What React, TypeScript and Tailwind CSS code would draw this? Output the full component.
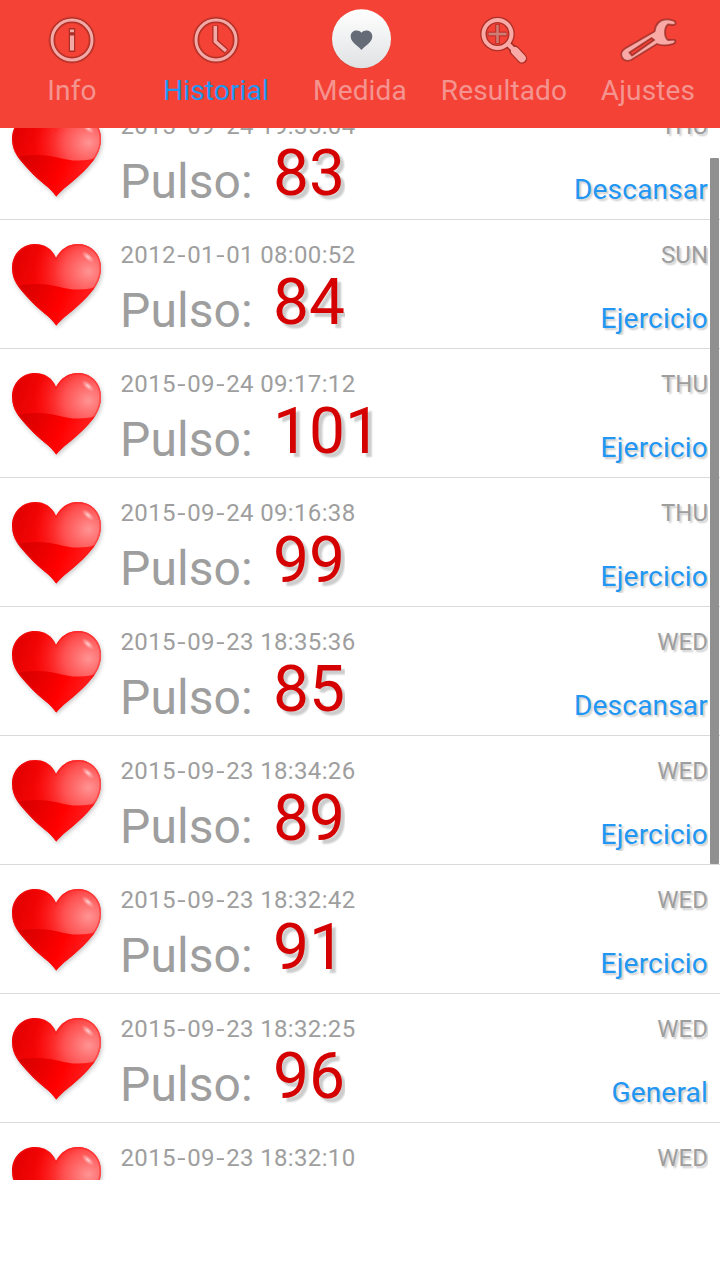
import React from 'react';

const records = [
  { date: '2015-09-24', time: '19:35:04', day: 'THU', pulse: 83, mode: 'Descansar' },
  { date: '2012-01-01', time: '08:00:52', day: 'SUN', pulse: 84, mode: 'Ejercicio' },
  { date: '2015-09-24', time: '09:17:12', day: 'THU', pulse: 101, mode: 'Ejercicio' },
  { date: '2015-09-24', time: '09:16:38', day: 'THU', pulse: 99, mode: 'Ejercicio' },
  { date: '2015-09-23', time: '18:35:36', day: 'WED', pulse: 85, mode: 'Descansar' },
  { date: '2015-09-23', time: '18:34:26', day: 'WED', pulse: 89, mode: 'Ejercicio' },
  { date: '2015-09-23', time: '18:32:42', day: 'WED', pulse: 91, mode: 'Ejercicio' },
  { date: '2015-09-23', time: '18:32:25', day: 'WED', pulse: 96, mode: 'General' },
  { date: '2015-09-23', time: '18:32:10', day: 'WED', pulse: 88, mode: 'General' },
];

const heartPath =
  'M44.2 82.5C39 74 28 68 18 57C7 45 0 38 0 25C0 11 10 1 23 1C33 1 40 6 44 15C49 6 56 1 66 1C79 1 89 11 89 25C89 38 82 47 71 58C61 68 50 75 44.2 82.5Z';

function HeartDefs() {
  return (
    <svg width="0" height="0" className="absolute">
      <defs>
        <linearGradient id="heartBase" x1="0" y1="0" x2="1" y2="0.3">
          <stop offset="0" stopColor="#dc0000" />
          <stop offset="0.4" stopColor="#f80606" />
          <stop offset="1" stopColor="#ff1c1c" />
        </linearGradient>
        <radialGradient id="heartGloss" cx="0.86" cy="0.34" r="0.62">
          <stop offset="0" stopColor="#ff9494" />
          <stop offset="0.45" stopColor="#ff5c5c" stopOpacity="0.85" />
          <stop offset="1" stopColor="#ff2020" stopOpacity="0" />
        </radialGradient>
        <radialGradient id="heartSpark" cx="0.5" cy="0.5" r="0.5">
          <stop offset="0" stopColor="#ffd8d8" />
          <stop offset="1" stopColor="#ffb0b0" stopOpacity="0" />
        </radialGradient>
        <linearGradient id="heartLower" x1="0" y1="0" x2="1" y2="0.2">
          <stop offset="0" stopColor="#d00000" />
          <stop offset="0.3" stopColor="#e40000" />
          <stop offset="0.6" stopColor="#ff0000" />
          <stop offset="1" stopColor="#ff2a2a" />
        </linearGradient>
        <clipPath id="heartClip">
          <path d={heartPath} />
        </clipPath>
      </defs>
    </svg>
  );
}

function Heart() {
  return (
    <svg viewBox="0 0 96 92" className="w-24 h-[92px] drop-shadow-[1px_2px_2px_rgba(0,0,0,0.22)]">
      <path d={heartPath} fill="url(#heartBase)" />
      <g clipPath="url(#heartClip)">
        <rect width="89" height="84" fill="url(#heartGloss)" />
        <ellipse cx="76" cy="14" rx="8" ry="3.5" transform="rotate(42 76 14)" fill="url(#heartSpark)" />
        <path d="M0 44C12 41 25 40 38 42C50 44 56 47 66 46.5C75 46.5 82 45 89 42V84H0Z" fill="url(#heartLower)" />
        <path d={heartPath} fill="none" stroke="#ff1010" strokeOpacity="0.4" strokeWidth="3" />
      </g>
    </svg>
  );
}

function InfoIcon() {
  return (
    <svg viewBox="0 0 60 60" className="w-[60px] h-[60px]" fill="none">
      <circle cx="30" cy="30" r="20" stroke="#8f2520" strokeOpacity="0.35" strokeWidth="7" />
      <circle cx="30" cy="30" r="20" stroke="#8f2520" strokeOpacity="0.55" strokeWidth="5" />
      <circle cx="30" cy="30" r="20" stroke="#f3aaa6" strokeWidth="3" />
      <path d="M30 18V42" stroke="#8f2520" strokeOpacity="0.7" strokeWidth="6.5" />
      <path d="M30 19.5V22.3M30 25.5V40.5" stroke="#f3aaa6" strokeWidth="4" />
    </svg>
  );
}

function ClockIcon() {
  return (
    <svg viewBox="0 0 60 60" className="w-[60px] h-[60px]" fill="none">
      <circle cx="30" cy="30" r="20" stroke="#8f2520" strokeOpacity="0.35" strokeWidth="7" />
      <path d="M29.3 15.5V31.5L40.5 41.5" stroke="#8f2520" strokeOpacity="0.7" strokeWidth="6" />
      <circle cx="30" cy="30" r="20" stroke="#8f2520" strokeOpacity="0.55" strokeWidth="5" />
      <circle cx="30" cy="30" r="20" stroke="#f3aaa6" strokeWidth="3" />
      <path d="M29.3 16V31.5L40 41" stroke="#f3aaa6" strokeWidth="3.5" />
    </svg>
  );
}

function MeasureIcon() {
  return (
    <svg viewBox="0 0 60 60" className="w-[60px] h-[60px] overflow-visible">
      <defs>
        <linearGradient id="measureBg" x1="0" y1="0" x2="0" y2="1">
          <stop offset="0" stopColor="#ffffff" />
          <stop offset="1" stopColor="#e0e2e3" />
        </linearGradient>
      </defs>
      <circle cx="31" cy="29.3" r="29.5" fill="#d23a30" fillOpacity="0.7" />
      <circle cx="31.5" cy="28.7" r="29.5" fill="url(#measureBg)" />
      <path
        d="M31.5 40C29 36.5 20.7 32.5 20.7 26.5C20.7 20 28.5 18.8 31.5 22.8C34.5 18.8 42.3 20 42.3 26.5C42.3 32.5 34 36.5 31.5 40Z"
        fill="#656b77"
      />
    </svg>
  );
}

function ResultIcon() {
  return (
    <svg viewBox="0 0 60 60" className="w-[60px] h-[60px]" fill="none">
      <path d="M34 34L40 40" stroke="#8f2520" strokeOpacity="0.7" strokeWidth="7.5" />
      <path d="M40.5 40.5L48 48.5" stroke="#8f2520" strokeOpacity="0.7" strokeWidth="10.5" strokeLinecap="round" />
      <circle cx="23.5" cy="24" r="14" stroke="#8f2520" strokeOpacity="0.7" strokeWidth="6.5" />
      <path d="M23.5 14V34M13.5 24H33.5" stroke="#8f2520" strokeOpacity="0.5" strokeWidth="5" />
      <path d="M23.5 15V33M14.5 24H32.5" stroke="#cf7d77" strokeWidth="2.4" />
      <circle cx="23.5" cy="24" r="14" stroke="#f9aaa6" strokeWidth="4" />
      <path d="M34 34L40 40" stroke="#f9aaa6" strokeWidth="4.5" />
      <path d="M41 41L47.8 48.3" stroke="#f9aaa6" strokeWidth="8" strokeLinecap="round" />
    </svg>
  );
}

function WrenchIcon() {
  return (
    <svg viewBox="0 0 60 60" className="w-[60px] h-[60px]">
      <path
        d="M55 10.5C49 8.5 44 9 40.5 12.5C37.5 15.5 37 18 36.5 21.5L7 38.5C-0.5 43.5 4.5 53.5 13 50L39 34C44 36 50 35.5 55 33.8C58.5 32.5 58 29.5 55 29.8L50 30C46 27 46 18 50 14.5L55 15C58.5 14.5 58.5 11.5 55 10.5Z"
        fill="#f9aaa6"
        stroke="#8f2520"
        strokeOpacity="0.7"
        strokeWidth="1.8"
      />
      <path d="M11.5 42.5L33.5 28L36 30L14 45.5Z" fill="#f44336" stroke="#8f2520" strokeOpacity="0.75" strokeWidth="1.8" />
    </svg>
  );
}

function DateText({ date, time }: { date: string; time: string }) {
  const [year, month, day] = date.split('-');
  const dash = <span className="inline-block px-[2.2px] scale-x-125">-</span>;

  return (
    <div className="pl-[0.5px] text-2xl leading-7 tracking-[0.34px] whitespace-nowrap text-[#9e9e9e]">
      {year}{dash}{month}{dash}{day} {time}
    </div>
  );
}

const tabs = [
  { label: 'Info', icon: <InfoIcon /> },
  { label: 'Historial', icon: <ClockIcon />, active: true },
  { label: 'Medida', icon: <MeasureIcon /> },
  { label: 'Resultado', icon: <ResultIcon /> },
  { label: 'Ajustes', icon: <WrenchIcon /> },
];

export default function App() {
  return (
    <div className="w-[720px] h-[1280px] overflow-hidden bg-white font-['Roboto',sans-serif]">
      <HeartDefs />

      {/* Tab bar */}
      <div className="h-32 bg-[#f44336] grid grid-cols-5 pt-2.5">
        {tabs.map((tab) => (
          <div key={tab.label} className="flex flex-col items-center">
            {tab.icon}
            <div
              className={
                tab.active
                  ? 'mt-[5px] text-[28px] leading-8 tracking-[0.15px] text-[#2196f3]'
                  : 'mt-[5px] text-[28px] leading-8 tracking-[0.15px] text-[#f49490]'
              }
            >
              {tab.label}
            </div>
          </div>
        ))}
      </div>

      {/* History list, scrolled part of a row down */}
      <div className="relative h-[1052px] overflow-hidden">
        <div className="-mt-[37px]">
          {records.map((record) => (
            <div key={record.time} className="h-[129px] border-b border-[#dadada] flex pl-3 pr-3">
              <div className="w-[108px] pt-[23px]">
                <Heart />
              </div>
              <div className="flex-1 pt-[21px]">
                <DateText date={record.date} time={record.time} />
                <div className="mt-1 flex">
                  <div className="w-[153px] pt-2 text-5xl leading-[60px] tracking-[0.1px] text-[#9e9e9e]">Pulso:</div>
                  <div className="overflow-hidden text-[64px] leading-[60px] text-[#d50000] [text-shadow:4px_4px_2px_#cccccc]">
                    {record.pulse}
                  </div>
                </div>
              </div>
              <div className="pt-[21px] flex flex-col items-end">
                <div className="overflow-hidden text-2xl leading-7 text-[#9e9e9e] [text-shadow:2px_2px_2px_#cccccc]">{record.day}</div>
                <div className="mt-[34px] overflow-hidden text-[28px] leading-8 tracking-[0.2px] text-[#2196f3] [text-shadow:2px_2px_2px_#cccccc]">
                  {record.mode}
                </div>
              </div>
            </div>
          ))}
        </div>

        {/* Scrollbar */}
        <div className="absolute top-[30px] right-[1px] w-[9px] h-[706px] rounded-[1px] bg-[#909090]"></div>
      </div>
    </div>
  );
}
